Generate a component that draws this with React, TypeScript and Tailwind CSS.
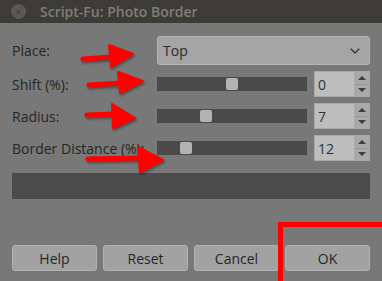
import { ChevronDown } from "lucide-react";

const font = { fontFamily: '"Open Sans", "DejaVu Sans", sans-serif' };

function Spin({ value }: { value: string }) {
  return (
    <div className="flex h-[26px] w-[56px] border border-[#a9a9a9] bg-[#a9a9a9]">
      <div className="flex flex-1 items-center bg-[#bdbdbd] pl-[3px] text-[14px] text-[#2e3436]">{value}</div>
      <div className="flex w-[15px] flex-col">
        <div className="flex flex-1 items-center justify-center border-b border-[#9a9a9a]">
          <div className="h-0 w-0 border-x-[4px] border-b-[4px] border-x-transparent border-b-[#3a3a3a]" />
        </div>
        <div className="flex flex-1 items-center justify-center">
          <div className="h-0 w-0 border-x-[4px] border-t-[4px] border-x-transparent border-t-[#3a3a3a]" />
        </div>
      </div>
    </div>
  );
}

function Slider({ pos }: { pos: number }) {
  return (
    <div className="relative h-[14px] w-[150px] bg-[#4a4a4a]">
      <div className="absolute top-px h-[12px] w-[12px] rounded-[2px] bg-[#b3b3b3]" style={{ left: pos }} />
    </div>
  );
}

function Btn({ label }: { label: string }) {
  return (
    <div className="flex h-[26px] w-[85px] items-center justify-center rounded-[3px] border border-[#b2b2b2] bg-[#a2a2a2] text-[14px] text-[#262626]">
      {label}
    </div>
  );
}

function Arrow({ x1, y1, x2, y2, top, tip, bot }: { x1: number; y1: number; x2: number; y2: number; top: [number, number]; tip: [number, number]; bot: [number, number] }) {
  return (
    <g>
      <line x1={x1} y1={y1} x2={x2} y2={y2} stroke="#ff0000" strokeWidth={5} strokeLinecap="round" />
      <polygon points={`${top[0]},${top[1]} ${tip[0]},${tip[1]} ${bot[0]},${bot[1]}`} fill="#ff0000" stroke="#ff0000" strokeWidth={2} strokeLinejoin="round" />
    </g>
  );
}

export default function App() {
  const rows = [
    { label: "Shift (%):", pos: 69, value: "0" },
    { label: "Radius:", pos: 43, value: "7" },
    { label: "Border Distance (%):", pos: 23, value: "12" },
  ];

  return (
    <div className="relative h-[281px] w-[382px] overflow-hidden bg-[#787878]" style={font}>
      {/* title bar */}
      <div className="flex h-[23px] items-center bg-[#3c3b37] pl-[11px]">
        <div className="flex h-[15px] w-[15px] items-center justify-center rounded-full bg-[#595854] text-[11px] leading-none text-[#3c3b37]">×</div>
        <span className="ml-[14px] text-[14px] font-semibold text-[#807e78]">Script-Fu: Photo Border</span>
      </div>

      <div className="px-[12px] pt-[13px]">
        <div className="grid grid-cols-[145px_213px] items-center gap-y-[6px]">
          <span className="text-[14px] text-[#262626]">Place:</span>
          <div className="flex h-[29px] items-center justify-between rounded-[3px] border border-[#b6b6b6] bg-[#a4a4a4] pl-[5px] pr-[6px] text-[14px] text-[#2a2a2a]">
            Top
            <ChevronDown size={16} strokeWidth={1.6} className="text-[#2a2a2a]" />
          </div>
          {rows.map((r) => (
            <div key={r.label} className="contents">
              <span className="text-[14px] text-[#262626]">{r.label}</span>
              <div className="flex items-center gap-[7px]">
                <Slider pos={r.pos} />
                <Spin value={r.value} />
              </div>
            </div>
          ))}
        </div>

        <div className="mt-[12px] h-[26px] bg-[#4b4b4b]" />

        <div className="mt-[46px] flex gap-[6px]">
          <Btn label="Help" />
          <Btn label="Reset" />
          <Btn label="Cancel" />
          <Btn label="OK" />
        </div>
      </div>

      {/* annotations */}
      <svg className="pointer-events-none absolute left-0 top-0" width={382} height={281} style={{ filter: "drop-shadow(1px 2px 1px rgba(0,0,0,0.35))" }}>
        <Arrow x1={83} y1={59} x2={112} y2={57} top={[109, 45]} tip={[133, 54]} bot={[111, 67]} />
        <Arrow x1={89} y1={85} x2={122} y2={83} top={[118, 72]} tip={[143, 81]} bot={[120, 93]} />
        <Arrow x1={87} y1={115} x2={115} y2={114} top={[112, 104]} tip={[135, 118]} bot={[113, 128]} />
        <Arrow x1={88} y1={159} x2={141} y2={158} top={[138, 147]} tip={[163, 160]} bot={[140, 172]} />
      </svg>
      <div className="pointer-events-none absolute left-[278px] top-[222px] h-[70px] w-[110px] border-[5px] border-[#ff0000]" />
    </div>
  );
}
